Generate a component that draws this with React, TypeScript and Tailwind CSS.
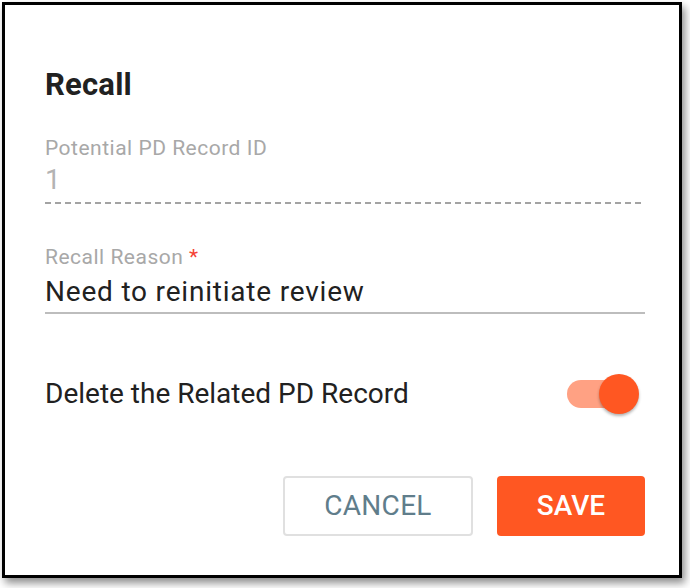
export default function App() {
  return (
    <div className="w-[690px] h-[588px] bg-white font-['Roboto',sans-serif] overflow-hidden">
      <div className="ml-[2px] mt-[2px] w-[680px] h-[576px] border-[3px] border-black bg-white shadow-[3px_5px_8px_rgba(0,0,0,0.45)] pl-10 pr-[34px] pt-[62px]">
        <h2 className="text-[31px] leading-[36px] font-bold tracking-[0.2px] text-[#212121]">Recall</h2>

        <div className="mt-[33px]">
          <label className="block text-[21px] leading-[24px] tracking-[0.5px] text-[#a8a8a8]">Potential PD Record ID</label>
          <div className="mt-[5px] text-[28px] leading-[30px] text-[#b3b3b3]">1</div>
          <div className="mt-[7px] h-[2px] bg-[linear-gradient(to_right,#a3a3a3_60%,transparent_60%)] bg-[length:10px_2px]" />
        </div>

        <div className="mt-[41px]">
          <label className="block text-[21px] leading-[24px] tracking-[0.5px] text-[#a8a8a8]">
            Recall Reason <span className="text-[#f44336]">*</span>
          </label>
          <div className="mt-[8px] text-[28px] leading-[30px] tracking-[0.8px] text-[#212121]">Need to reinitiate review</div>
          <div className="mt-[5px] h-[2px] bg-[#bdbdbd]" />
        </div>

        <div className="mt-[65px] flex items-center justify-between">
          <span className="text-[28px] leading-[30px] text-[#212121]">Delete the Related PD Record</span>
          <div className="relative mr-[10px] h-[28px] w-[68px] rounded-full bg-[#ffa183]">
            <div className="absolute right-[-4px] top-[-6px] h-[40px] w-[40px] rounded-full bg-[#ff5722] shadow-[0_2px_3px_rgba(0,0,0,0.3)]" />
          </div>
        </div>

        <div className="mt-[67px] flex justify-end gap-6">
          <button className="h-[60px] w-[190px] rounded-[4px] border-2 border-[#e0e0e0] bg-white text-[28px] tracking-[0.3px] text-[#607d8b]">
            CANCEL
          </button>
          <button className="h-[60px] w-[148px] rounded-[4px] bg-[#ff5722] text-[28px] font-medium text-white">
            SAVE
          </button>
        </div>
      </div>
    </div>
  );
}
